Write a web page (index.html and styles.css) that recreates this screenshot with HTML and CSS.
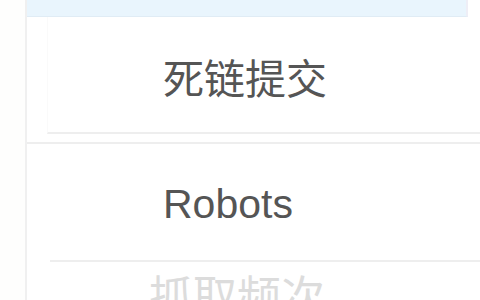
FILE: index.html
```html
<!DOCTYPE html>
<html lang="zh-CN">
<head>
    <meta charset="UTF-8">
    <meta name="viewport" content="width=device-width, initial-scale=1.0">
    <title>抓取工具</title>
    <link rel="stylesheet" href="styles.css">
</head>
<body>
    <div class="page">
        <div class="gutter"></div>
        <div class="panel">
            <div class="topbar"></div>
            <div class="item first">死链提交</div>
            <div class="gap"></div>
            <div class="item second">Robots</div>
            <div class="item faded">抓取频次</div>
        </div>
    </div>
</body>
</html>
```

FILE: styles.css
```css
body {
    margin: 0;
    background-color: #fff;
    font-family: "Liberation Sans", "Noto Sans CJK SC", sans-serif;
}
.page {
    display: flex;
    height: 300px;
    overflow: hidden;
}
.gutter {
    width: 25px;
    background-color: #fefefd;
}
.panel {
    flex: 1;
    border-left: 2px solid #f0f0f0;
}
.topbar {
    height: 16px;
    background-color: #e9f5fd;
    border-bottom: 1px solid #e0ecf5;
    margin-right: 12px;
    border-right: 2px solid #eeeef6;
}
.item {
    display: flex;
    align-items: center;
    box-sizing: border-box;
    padding-left: 136px;
    font-size: 41px;
    line-height: 1;
    color: #555;
}
.item.first {
    height: 117px;
    padding-top: 12px;
    border-bottom: 2px solid #eeeeee;
    border-left: 1px solid #fafafa;
    margin-left: 20px;
    padding-left: 115px;
}
.gap {
    height: 8px;
}
.item.second {
    height: 120px;
    padding-top: 2px;
    border-top: 2px solid #eeeeee;
    position: relative;
}
.item.second::after {
    content: "";
    position: absolute;
    left: 23px;
    right: 0;
    bottom: 0;
    border-bottom: 2px solid #eeeeee;
}
.item.faded {
    padding-top: 14px;
    padding-left: 122px;
    color: #dcdcdc;
    font-size: 44px;
}
```
